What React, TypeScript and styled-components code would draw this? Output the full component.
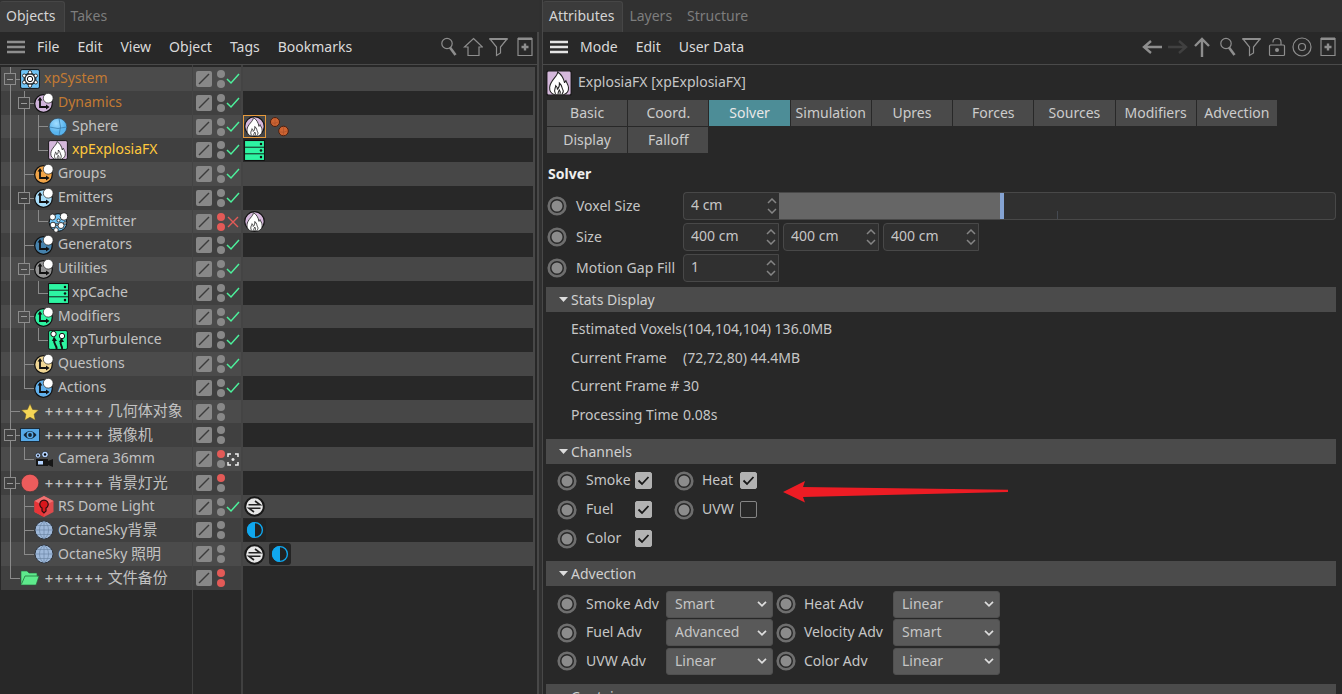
import React from 'react';
import styled, { createGlobalStyle, css } from 'styled-components';

const Global = createGlobalStyle`
  *, *::before, *::after { box-sizing: border-box; }
  body { margin: 0; background: #282828; overflow: hidden; }
  body, button, input, select { font: 14px/20px "Noto Sans", "Noto Sans CJK SC", sans-serif; color: #c6c6c6; }
  button, input, select { border: 0; margin: 0; padding: 0; background: none; }
`;

const Window = styled.main`
  display: grid;
  grid-template-columns: minmax(0, 539fr) minmax(0, 800fr);
  gap: 3px;
  height: 100vh;
  overflow: hidden;
  background: #303030;
`;
const Panel = styled.section<{ $side: 'left' | 'right' }>`
  display: flex;
  flex-direction: column;
  min-width: 0;
  min-height: 0;
  ${p => p.$side === 'right' && css`border-left: 1px solid #484848;`}
`;
const TabBar = styled.nav`
  display: flex;
  height: 32px;
  flex: none;
  background: #313131;
`;
const PanelTab = styled.button<{ $active?: boolean }>`
  margin-top: 1px;
  padding: 0 8px 2px 6px;
  color: ${p => p.$active ? '#d4d4d4' : '#7d7d7d'};
  background: ${p => p.$active ? '#3b3b3b' : 'transparent'};
  border: solid ${p => p.$active ? '#464646' : 'transparent'};
  border-width: 1px 1px 0 0;
  border-radius: 3px 3px 0 0;
`;
const MenuBar = styled.div<{ $side: 'left' | 'right' }>`
  display: flex;
  align-items: center;
  flex: none;
  height: 33px;
  padding: 0 ${p => p.$side === 'left' ? 2 : 4}px 2px 7px;
  background: #282828;
  border-bottom: 1px solid #4a4a4a;
  ${p => p.$side === 'left' && css`border-right: 2px solid #484848;`}
`;
const Menus = styled.div`
  display: flex;
  gap: 18px;
  padding: 0 0 1px 12px;
`;
const Menu = styled.button`
  color: #dadada;
  white-space: nowrap;
`;
const Tools = styled.div`
  display: flex;
  align-items: center;
  gap: 6px;
  margin-left: auto;
`;
const IconButton = styled.button`
  display: flex;
  align-items: center;
  justify-content: center;
`;
const Glyph = styled.svg`
  display: block;
  flex: none;
`;

/* Object tree */
const Tree = styled.ul`
  display: grid;
  grid-auto-rows: 24px 24px 23px 24px;
  align-content: start;
  flex: 1;
  min-height: 0;
  margin: 0;
  padding: 2px 2px 0 1px;
  list-style: none;
  border-right: 2px solid #484848;
  background:
    linear-gradient(#404040, #404040) 192px 0 / 1px 100% no-repeat,
    linear-gradient(#404040, #404040) 241px 0 / 2px 100% no-repeat,
    #282828;
`;
const TreeRow = styled.li`
  display: grid;
  grid-template-columns: 191px 48px minmax(0, 1fr);
  gap: 1px;
  background: #444444;
  border-right: 2px solid #484848;
  --cell: #4b4b4b;
  --tags: #474747;
  &:nth-child(even) { --cell: #404040; --tags: #282828; }
`;
const NameCell = styled.div`
  display: flex;
  align-items: center;
  padding-left: 2px;
  background: var(--cell);
  white-space: nowrap;
`;
type GuideKind = 'line' | 'tee' | 'end' | 'box';
const Guide = styled.span<{ $kind: GuideKind; $wide: boolean }>`
  display: flex;
  align-items: center;
  align-self: stretch;
  flex: none;
  width: ${p => p.$wide ? 17 : 14}px;
  padding-left: 1px;
  background-image: linear-gradient(#8a8a8a, #8a8a8a), linear-gradient(#8a8a8a, #8a8a8a);
  background-repeat: no-repeat;
  background-position: 7px 0, 7px 50%;
  background-size: 1px ${p => p.$kind === 'end' ? '50%' : '100%'}, ${p => p.$kind === 'line' ? 0 : 10}px 1px;
`;
const Expander = styled.button`
  width: 12px;
  height: 12px;
  border: 1px solid #8c8c8c;
  background: linear-gradient(#9a9a9a, #9a9a9a) center / 6px 1px no-repeat, var(--cell);
`;
const NodeIcon = styled.span`
  display: flex;
  width: 20px;
  justify-content: center;
  margin-right: 4px;
`;
const NodeName = styled.span<{ $tone?: string }>`
  padding-bottom: 2px;
  color: ${p => p.$tone ?? '#c2c2c2'};
`;
const Pluses = styled.span`
  font-family: Inter, sans-serif;
  font-size: 15px;
`;
const Cjk = styled.span`
  font-family: "Noto Sans CJK SC", sans-serif;
  font-size: 15px;
`;
const StateCell = styled.div`
  display: flex;
  align-items: center;
  padding-left: 3px;
  background: var(--cell);
`;
const LayerButton = styled.button`
  display: flex;
  width: 16px;
  height: 16px;
  border-radius: 2px;
  background: #888888;
`;
const Dots = styled.span`
  display: grid;
  gap: 2px;
  margin: 0 1px 0 5px;
`;
const Dot = styled.i<{ $off?: boolean }>`
  width: 8px;
  height: 8px;
  border-radius: 50%;
  background: ${p => p.$off ? '#e35a57' : '#888888'};
`;
const TagCell = styled.div`
  display: flex;
  align-items: center;
  gap: 2px;
  margin-left: 1px;
  background: var(--tags);
`;
const Tag = styled.button<{ $selected?: boolean }>`
  display: flex;
  align-items: center;
  justify-content: center;
  width: 23px;
  height: 23px;
  border: 1px solid ${p => p.$selected ? '#e69a3c' : 'transparent'};
`;

/* Attributes */
const Attributes = styled.div`
  flex: 1;
  min-height: 0;
  overflow: hidden;
  padding: 5px 6px 0 3px;
  background: #282828;
`;
const ObjectTitle = styled.h1`
  display: flex;
  align-items: center;
  gap: 6px;
  height: 26px;
  margin: 0 0 4px;
  font-size: 14px;
  font-weight: 400;
`;
const TitleText = styled.span`
  padding-bottom: 2px;
`;
const PageTabs = styled.div`
  display: grid;
  grid-template-columns: repeat(auto-fill, minmax(80px, 1fr));
  grid-auto-rows: 26px;
  gap: 1px;
  max-width: 730px;
  margin-left: 1px;
`;
const PageTab = styled.button<{ $active?: boolean }>`
  white-space: nowrap;
  background: ${p => p.$active ? '#4d8d97' : '#4a4a4a'};
  color: ${p => p.$active ? '#e8e8e8' : '#cccccc'};
`;
const Heading = styled.h2`
  margin: 11px 0 8px 2px;
  font-size: 14px;
  line-height: 20px;
  font-weight: 700;
  color: #eeeeee;
`;
const Fields = styled.div`
  display: grid;
  grid-auto-rows: 28px;
  gap: 3px;
  margin-bottom: 5px;
`;
const Field = styled.div`
  display: grid;
  grid-template-columns: 30px 107px minmax(0, 1fr);
  align-items: center;
  white-space: nowrap;
`;
const Label = styled.label`
  padding-bottom: 1px;
`;
const Inputs = styled.div`
  display: flex;
  gap: 4px;
`;
const NumberBox = styled.span<{ $joined?: boolean }>`
  display: flex;
  align-items: center;
  flex: none;
  width: 96px;
  height: 28px;
  padding: 0 2px 0 7px;
  background: #303030;
  border: 1px solid #484848;
  border-radius: 4px 0 0 4px;
  ${p => p.$joined && css`border-right: 0;`}
  input { flex: 1; min-width: 0; padding-bottom: 2px; outline: 0; }
`;
const SliderBox = styled.div`
  display: flex;
  min-width: 0;
`;
const Track = styled.span`
  display: flex;
  flex: 1;
  min-width: 0;
  height: 28px;
  background: #303030;
  border: 1px solid #484848;
  border-left: 0;
  border-radius: 0 4px 4px 0;
  overflow: hidden;
`;
const Range = styled.input`
  appearance: none;
  width: 100%;
  height: 26px;
  background:
    linear-gradient(#666666, #666666) 0 0 / 40% 100% no-repeat,
    linear-gradient(#454a52, #454a52) 50% 100% / 1px 8px no-repeat;
  &::-webkit-slider-thumb {
    appearance: none;
    width: 4px;
    height: 26px;
    background: #85a3d2;
  }
`;
const Bar = styled.button`
  display: flex;
  align-items: center;
  width: 100%;
  height: 25px;
  padding-left: 13px;
  background: #4b4b4b;
  color: #d0d0d0;
  svg { margin-right: 3px; }
`;
const Stats = styled.dl`
  display: grid;
  grid-template-columns: 112px 1fr;
  grid-template-rows: 29px 29px 28px 29px;
  align-items: center;
  margin: 0;
  padding: 2px 0 10px 25px;
  white-space: nowrap;
  dt, dd { margin: 0; }
`;
const Channels = styled.div`
  display: grid;
  grid-template-columns: 30px 49px 38px 29px 38px 20px;
  grid-auto-rows: 29px;
  align-items: center;
  padding: 2px 0 8px 10px;
  white-space: nowrap;
`;
const Check = styled.input`
  appearance: none;
  width: 17px;
  height: 17px;
  border: 1px solid #858585;
  border-radius: 2px;
  &:checked {
    border-color: #b2b2b2;
    background: #b2b2b2 url("data:image/svg+xml,%3Csvg xmlns='http://www.w3.org/2000/svg' viewBox='0 0 15 15'%3E%3Cpath d='M2.500 7.500l3.500 3.500 6.500-7' fill='none' stroke='%23181818' stroke-width='1.800'/%3E%3C/svg%3E") center / 15px no-repeat;
  }
`;
const Advection = styled.div`
  display: grid;
  grid-template-columns: 30px 80px 109px 29px 89px 107px;
  grid-template-rows: 28px 29px 28px;
  align-items: center;
  padding: 4px 0 9px 10px;
  white-space: nowrap;
`;
const Select = styled.select`
  appearance: none;
  width: 107px;
  height: 27px;
  padding: 0 24px 1px 8px;
  border: 1px solid #505050;
  border-radius: 3px;
  background: #595959 url("data:image/svg+xml,%3Csvg xmlns='http://www.w3.org/2000/svg' viewBox='0 0 10 6'%3E%3Cpath d='M1 .8l4 4 4-4' fill='none' stroke='%23dddddd' stroke-width='1.700'/%3E%3C/svg%3E") right 5px center / 10px 6px no-repeat;
`;
const Keyframe = styled.button`
  display: flex;
  width: 20px;
  margin-left: 1px;
`;
const Annotated = styled.div`
  position: relative;
`;
const Pointer = styled.svg`
  position: absolute;
  left: 237px;
  top: 17px;
`;

const Flame = ({ s = 20, round = false }: { s?: number; round?: boolean }) => (
  <Glyph width={s} height={s} viewBox="0 0 20 20">
    {round ? <circle cx="10" cy="10" r="9.3" fill="#d5b8dc" stroke="#111" strokeWidth="1.2" />
      : <rect x=".6" y=".6" width="18.8" height="18.8" rx="1.5" fill="#d5b8dc" stroke="#181818" strokeWidth="1" />}
    <path d="M9 1.500C9 5 3.200 8 2.800 13.300c-.2 3 1.500 5 3.800 5.700h7c2.500-.8 3.900-3 3.700-5.500-.2-2.500-1.500-3.600-2-5.300-.6.600-.8 1-1 1.700C13.500 6 12 3.500 9 1.500z" fill="#fff" stroke="#222" strokeWidth=".8" />
    <path d="M7.300 18.500c-2-3 .2-4.300.2-6.500 1 .8 1.200 1.500 1.300 2.700 1.200-1 1.700-2.800 1.500-4.700 2.200 2 1.700 3.500 2.600 5 .8 1.200.3 2.500-.6 3.500M9.300 18.500c-.3-1.500.7-2 .9-3.200.9 1 1 2 .5 3.200" fill="none" stroke="#222" strokeWidth=".8" />
  </Glyph>
);
const Axis = ({ c }: { c: string }) => (
  <Glyph width="20" height="20" viewBox="0 0 20 20">
    <circle cx="9.5" cy="10.5" r="8.8" fill={c} stroke="#111" strokeWidth="1.2" />
    <path d="M6 6v8h7" fill="none" stroke="#111" strokeWidth="1.8" />
    <path d="M3.600 7.500L6 4l2.400 3.500zM12 11.600l3.600 2.400-3.600 2.400z" fill="#111" />
    <circle cx="14.200" cy="5.200" r="4.900" fill="#fff" stroke="#222" strokeWidth=".7" />
  </Glyph>
);
const Cache = () => (
  <Glyph width="21" height="21" viewBox="0 0 20 20">
    <rect width="20" height="20" rx="1" fill="#111" />
    {[1, 7.3, 13.6].map(y => <g key={y}><rect x="1" y={y} width="18" height="5.4" fill="#2df5a2" /><circle cx="16.2" cy={y + 2.7} r="1.2" fill="#111" /></g>)}
  </Glyph>
);
const Sky = () => (
  <Glyph width="20" height="20" viewBox="0 0 20 20">
    <circle cx="10" cy="10" r="9" fill="#9fb9da" stroke="#30363f" />
    <path d="M10 1v18M1 10h18M3 5.500h14M3 14.500h14M10 1C4 5 4 15 10 19M10 1c6 4 6 14 0 18" fill="none" stroke="#6f88a6" strokeWidth=".7" />
  </Glyph>
);
const Swap = () => (
  <Glyph width="21" height="21" viewBox="0 0 21 21">
    <circle cx="10.5" cy="10.5" r="9.3" fill="#e6e6e6" stroke="#181818" strokeWidth="2" />
    <path d="M4.500 8.800H16L11 5M16.500 12.200H5l5 3.800" fill="none" stroke="#222" strokeWidth="1.600" />
  </Glyph>
);
const Half = () => (
  <Glyph width="22" height="22" viewBox="0 0 22 22">
    <rect width="22" height="22" rx="3" fill="#242424" />
    <circle cx="11" cy="11" r="7.400" fill="#222" stroke="#10a7ee" strokeWidth="1.400" />
    <path d="M11 3a8 8 0 0 0 0 16z" fill="#10a7ee" />
  </Glyph>
);
const icons: Record<string, React.ReactNode> = {
  system: <Glyph width="20" height="20" viewBox="0 0 20 20"><rect x=".6" y=".6" width="18.8" height="18.8" rx="1.5" fill="#70c4f5" stroke="#111" /><path d="M10 3.300l5.800 3.400v6.600L10 16.700l-5.800-3.400V6.700z" fill="none" stroke="#111" strokeWidth="1" /><circle cx="10" cy="10" r="5" fill="#fff" stroke="#111" /><circle cx="10" cy="10" r="2.700" fill="#fff" stroke="#111" />{[[10, 3.3], [15.8, 6.7], [15.8, 13.3], [10, 16.7], [4.2, 13.3], [4.2, 6.7]].map(([x, y]) => <circle key={`${x}-${y}`} cx={x} cy={y} r="1.7" fill="#fff" stroke="#111" strokeWidth=".8" />)}</Glyph>,
  sphere: <Glyph width="20" height="20" viewBox="0 0 20 20"><defs><radialGradient id="ball" cx=".4" cy=".3"><stop stopColor="#a0dcff" /><stop offset="1" stopColor="#59b4ee" /></radialGradient></defs><circle cx="10" cy="10" r="8.800" fill="url(#ball)" stroke="#34495a" strokeWidth=".7" /><path d="M1.300 10q8.700 3 17.400 0M11 1.300q3 8.500 0 17.400" fill="none" stroke="#3c7fae" strokeWidth=".8" /></Glyph>,
  flame: <Flame />,
  emitter: <Glyph width="20" height="20" viewBox="0 0 20 20"><circle cx="10" cy="10.5" r="8.8" fill="#70c4f5" stroke="#111" />{[[4.5, 5, 3], [16, 4.5, 3.8], [5, 13, 2.8], [13, 13.5, 3], [8, 18, 2.3], [10.5, 8.5, 1.5], [17, 11, 1.3], [9, 12.5, 1]].map(([x, y, r]) => <circle key={`${x}-${y}`} cx={x} cy={y} r={r} fill="#fff" stroke="#111" strokeWidth=".8" />)}</Glyph>,
  cache: <Cache />,
  turbulence: <Glyph width="20" height="20" viewBox="0 0 20 20"><rect x=".6" y=".6" width="18.8" height="18.8" rx="1.5" fill="#2df5a2" stroke="#111" /><path d="M8.500 19c1-4-4-5-2-9M14 19c1-3-3-4-1-8" fill="none" stroke="#111" strokeWidth="2" /><path d="M4 11l2-4.500L9 11zM11 12l2.500-4.500L16 12z" fill="#111" /><circle cx="5.500" cy="4" r="2.700" fill="#fff" stroke="#111" /><circle cx="14" cy="6" r="2.700" fill="#fff" stroke="#111" /></Glyph>,
  star: <Glyph width="20" height="20" viewBox="0 0 20 20"><path d="M10 1.800l2.600 5.600 6 .7-4.500 4.100 1.200 6-5.300-3-5.300 3 1.200-6L1.400 8.100l6-.7z" fill="#f5d555" stroke="#54492a" strokeWidth=".5" /></Glyph>,
  eye: <Glyph width="20" height="20" viewBox="0 0 20 20"><rect x=".5" y="3.500" width="19" height="13" fill="#57aae8" stroke="#1c2c3a" /><path d="M3.500 10Q10 2 16.500 10 10 18 3.500 10z" fill="#142433" /><circle cx="10" cy="10" r="3.400" fill="#57aae8" /><circle cx="10" cy="10" r="1.900" fill="#142433" /></Glyph>,
  camera: <Glyph width="20" height="20" viewBox="0 0 20 20"><path d="M2 10h12v2l5-2v8l-5-2v1H2z" fill="#161616" /><rect x="4" y="12" width="5" height="3.500" fill="#b5d4ff" /><circle cx="4" cy="6.500" r="2.700" fill="#b5d4ff" stroke="#161616" strokeWidth=".7" /><circle cx="11" cy="5.500" r="3.300" fill="#b5d4ff" stroke="#161616" strokeWidth=".7" /><circle cx="4" cy="6.500" r=".9" /><circle cx="11" cy="5.500" r="1.200" /></Glyph>,
  red: <Glyph width="20" height="20" viewBox="0 0 20 20"><circle cx="10" cy="10" r="8.800" fill="#ed5c5c" stroke="#3d3030" strokeWidth=".6" /></Glyph>,
  dome: <Glyph width="20" height="21" viewBox="0 0 20 21"><path d="M10 0l9.500 5v11L10 21 .5 16V5z" fill="#df4a4c" /><path d="M10 0l9.500 5L10 10 .5 5z" fill="#ef7272" /><path d="M.5 5L10 10v11L.5 16z" fill="#e83437" /><path d="M8 15v-3a4.200 4.200 0 1 1 4 0v3l-2 2z" fill="#d8171c" stroke="#2d0e10" strokeWidth="1.200" /></Glyph>,
  sky: <Sky />,
  folder: <Glyph width="20" height="20" viewBox="0 0 20 20"><path d="M1 3h6l2 2h8v3h2l-3 9H1z" fill="#5eea8c" stroke="#285c3a" strokeWidth=".6" /><path d="M1.500 16L5 8h13" fill="none" stroke="#2d8a4c" /></Glyph>,
};
const tags: Record<string, React.ReactNode> = {
  flame: <Flame s={21} round />,
  balls: <Glyph width="21" height="21" viewBox="0 0 21 21"><circle cx="6" cy="6" r="4.500" fill="#cd6432" stroke="#4a1f10" /><circle cx="14.500" cy="15" r="4.800" fill="#cd6432" stroke="#4a1f10" /><path d="M3 7q3 1 6-1M11 16q4 1 7-1M6 2v8M14.500 11v8" fill="none" stroke="#a84e28" strokeWidth=".6" /></Glyph>,
  cache: <Cache />,
  swap: <Swap />,
  half: <Half />,
};

type Row = { name: string; icon: string; guides: GuideKind[]; tone?: string; state?: 'on' | 'off' | 'target'; dots?: [boolean, boolean]; tags?: string[] };
const axisColors: Record<string, string> = { Dynamics: '#d0b3dc', Groups: '#f0a448', Emitters: '#a9dffc', Generators: '#4682ac', Utilities: '#969696', Modifiers: '#2df5a2', Questions: '#f0d694', Actions: '#62b2ee' };
const rows: Row[] = [
  { name: 'xpSystem', icon: 'system', guides: ['box'], tone: '#c27a33', state: 'on' },
  { name: 'Dynamics', icon: 'axis', guides: ['line', 'box'], tone: '#c27a33', state: 'on' },
  { name: 'Sphere', icon: 'sphere', guides: ['line', 'line', 'tee'], state: 'on', tags: ['flame', 'balls'] },
  { name: 'xpExplosiaFX', icon: 'flame', guides: ['line', 'line', 'end'], tone: '#ffc83c', state: 'on', tags: ['cache'] },
  { name: 'Groups', icon: 'axis', guides: ['line', 'tee'], state: 'on' },
  { name: 'Emitters', icon: 'axis', guides: ['line', 'box'], state: 'on' },
  { name: 'xpEmitter', icon: 'emitter', guides: ['line', 'line', 'end'], state: 'off', dots: [true, true], tags: ['flame'] },
  { name: 'Generators', icon: 'axis', guides: ['line', 'tee'], state: 'on' },
  { name: 'Utilities', icon: 'axis', guides: ['line', 'box'], state: 'on' },
  { name: 'xpCache', icon: 'cache', guides: ['line', 'line', 'end'], state: 'on' },
  { name: 'Modifiers', icon: 'axis', guides: ['line', 'box'], state: 'on' },
  { name: 'xpTurbulence', icon: 'turbulence', guides: ['line', 'line', 'end'], state: 'on' },
  { name: 'Questions', icon: 'axis', guides: ['line', 'tee'], state: 'on' },
  { name: 'Actions', icon: 'axis', guides: ['line', 'end'], state: 'on' },
  { name: '++++++ 几何体对象', icon: 'star', guides: ['tee'] },
  { name: '++++++ 摄像机', icon: 'eye', guides: ['box'] },
  { name: 'Camera 36mm', icon: 'camera', guides: ['line', 'end'], state: 'target', dots: [true, false] },
  { name: '++++++ 背景灯光', icon: 'red', guides: ['box'], dots: [true, false] },
  { name: 'RS Dome Light', icon: 'dome', guides: ['line', 'tee'], state: 'on', tags: ['swap'] },
  { name: 'OctaneSky背景', icon: 'sky', guides: ['line', 'tee'], tags: ['half'] },
  { name: 'OctaneSky 照明', icon: 'sky', guides: ['line', 'end'], tags: ['swap', 'half'] },
  { name: '++++++ 文件备份', icon: 'folder', guides: ['end'], dots: [true, true] },
];

const renderName = (name: string) => name.split(/(\++ |[\u4e00-\u9fff]+)/).filter(Boolean).map(part => {
  if (part.startsWith('+')) return <Pluses key={part}>{part}</Pluses>;
  if (/[\u4e00-\u9fff]/.test(part)) return <Cjk key={part}>{part}</Cjk>;
  return part;
});

const StateMark = ({ state }: { state?: Row['state'] }) => {
  if (state === 'on') return <Glyph width="14" height="12" viewBox="0 0 14 12"><path d="M1 6l4 4 8-9" fill="none" stroke="#4df09c" strokeWidth="1.500" /></Glyph>;
  if (state === 'off') return <Glyph width="14" height="12" viewBox="0 0 14 12"><path d="M2 1l10 10M12 1L2 11" stroke="#e35a57" strokeWidth="1.400" /></Glyph>;
  if (state === 'target') return <Glyph width="14" height="13" viewBox="0 0 14 13"><path d="M2 4V1h3M9 1h3v3M12 9v3H9M5 12H2V9M7 5v3M5.500 6.500h3" fill="none" stroke="#eee" strokeWidth="1.500" /></Glyph>;
  return null;
};

const line = { fill: 'none', stroke: '#8e8e8e', strokeWidth: 1.2 };
const Burger = ({ c }: { c: string }) => <Glyph width="18" height="14" viewBox="0 0 18 14"><path d="M0 2h18M0 7h18M0 12h18" stroke={c} strokeWidth="2.400" /></Glyph>;
const Search = () => <Glyph width="20" height="20" viewBox="0 0 20 20"><circle cx="10" cy="6.500" r="5.200" {...line} /><path d="M13 10.500l5.500 7.500" stroke="#8e8e8e" strokeWidth="2.600" /></Glyph>;
const Home = () => <Glyph width="20" height="20" viewBox="0 0 20 20"><path d="M10.500 1.500l9 8.500H16v8.500H5V10H1.500z" {...line} /></Glyph>;
const Funnel = () => <Glyph width="20" height="20" viewBox="0 0 20 20"><path d="M1 2h17l-6.500 8v6l-4 2.500V10z" {...line} /><path d="M.5 2h18" stroke="#8e8e8e" strokeWidth="2" /></Glyph>;
const AddBox = () => <Glyph width="20" height="20" viewBox="0 0 20 20"><path d="M3 1.500h14v17H3z" {...line} /><path d="M3 1.800h14M10 6.500v7M6.500 10h7" stroke="#8e8e8e" strokeWidth="2.400" /></Glyph>;
const Arrow = ({ d, c, w = 20 }: { d: string; c: string; w?: number }) => <Glyph width={w} height="20" viewBox={`0 0 ${w} 20`}><path d={d} fill="none" stroke={c} strokeWidth="2.400" /></Glyph>;
const Lock = () => <Glyph width="18" height="20" viewBox="0 0 18 20"><rect x="1.500" y="8" width="15" height="10.500" rx="1" {...line} /><path d="M5 5.500V5q0-3.500 4-3.500T13 5v3" {...line} /><circle cx="9" cy="13" r="2" fill="#8e8e8e" /></Glyph>;
const Target = () => <Glyph width="20" height="20" viewBox="0 0 20 20"><circle cx="10" cy="10" r="9" {...line} /><circle cx="10" cy="10" r="3.500" {...line} /></Glyph>;
const KeyDot = ({ label }: { label: string }) => (
  <Keyframe aria-label={`Keyframe ${label}`}>
    <Glyph width="20" height="20" viewBox="0 0 20 20"><circle cx="10" cy="10" r="8.300" fill="none" stroke="#6e6e6e" strokeWidth="2.600" /><circle cx="10" cy="10" r="5.500" fill="#8c8c8c" /></Glyph>
  </Keyframe>
);
const Num = ({ label, value, joined }: { label: string; value: string; joined?: boolean }) => (
  <NumberBox $joined={joined}>
    <input id={label} aria-label={label} defaultValue={value} />
    <Glyph width="10" height="16" viewBox="0 0 10 16"><path d="M1 5l4-4 4 4M1 11l4 4 4-4" fill="none" stroke="#858585" strokeWidth="1.500" /></Glyph>
  </NumberBox>
);
const Section = ({ title }: { title: string }) => (
  <Bar><Glyph width="9" height="5" viewBox="0 0 9 5"><path d="M0 0h9L4.500 5z" fill="#ddd" /></Glyph>{title}</Bar>
);
const Channel = ({ name, on }: { name: string; on: boolean }) => (
  <><KeyDot label={name} /><Label htmlFor={name}>{name}</Label><Check type="checkbox" id={name} defaultChecked={on} /></>
);
const Adv = ({ name, value }: { name: string; value: string }) => (
  <><KeyDot label={name} /><Label htmlFor={name}>{name}</Label><Select id={name} defaultValue={value}>{['Smart', 'Advanced', 'Linear'].map(o => <option key={o}>{o}</option>)}</Select></>
);

export default function App() {
  return (
    <Window>
      <Global />
      <Panel $side="left">
        <TabBar><PanelTab $active>Objects</PanelTab><PanelTab>Takes</PanelTab></TabBar>
        <MenuBar $side="left">
          <IconButton aria-label="Panel menu"><Burger c="#8e8e8e" /></IconButton>
          <Menus>{['File', 'Edit', 'View', 'Object', 'Tags', 'Bookmarks'].map(m => <Menu key={m}>{m}</Menu>)}</Menus>
          <Tools>
            <IconButton aria-label="Search"><Search /></IconButton>
            <IconButton aria-label="Home"><Home /></IconButton>
            <IconButton aria-label="Filter"><Funnel /></IconButton>
            <IconButton aria-label="New panel"><AddBox /></IconButton>
          </Tools>
        </MenuBar>
        <Tree>
          {rows.map(r => (
            <TreeRow key={r.name}>
              <NameCell>
                {r.guides.map((g, i) => (
                  <Guide key={i} $kind={g} $wide={i === r.guides.length - 1}>
                    {g === 'box' && <Expander aria-label={`Collapse ${r.name}`} />}
                  </Guide>
                ))}
                <NodeIcon>{r.icon === 'axis' ? <Axis c={axisColors[r.name]} /> : icons[r.icon]}</NodeIcon>
                <NodeName $tone={r.tone}>{renderName(r.name)}</NodeName>
              </NameCell>
              <StateCell>
                <LayerButton aria-label={`Layer of ${r.name}`}><Glyph width="16" height="16" viewBox="0 0 16 16"><path d="M3 13L13 3" stroke="#3c3c3c" strokeWidth="1.500" /></Glyph></LayerButton>
                <Dots><Dot $off={r.dots?.[0]} /><Dot $off={r.dots?.[1]} /></Dots>
                <StateMark state={r.state} />
              </StateCell>
              <TagCell>
                {r.tags?.map(t => <Tag key={t} aria-label={`${t} tag`} $selected={r.name === 'Sphere' && t === 'flame'}>{tags[t]}</Tag>)}
              </TagCell>
            </TreeRow>
          ))}
        </Tree>
      </Panel>
      <Panel $side="right">
        <TabBar><PanelTab $active>Attributes</PanelTab><PanelTab>Layers</PanelTab><PanelTab>Structure</PanelTab></TabBar>
        <MenuBar $side="right">
          <IconButton aria-label="Panel menu"><Burger c="#e4e4e4" /></IconButton>
          <Menus>{['Mode', 'Edit', 'User Data'].map(m => <Menu key={m}>{m}</Menu>)}</Menus>
          <Tools>
            <IconButton aria-label="Back"><Arrow c="#8e8e8e" d="M20 10H2M9 4l-7 6 7 6" /></IconButton>
            <IconButton aria-label="Forward"><Arrow c="#404040" d="M0 10h18M11 4l7 6-7 6" /></IconButton>
            <IconButton aria-label="Up"><Arrow c="#8e8e8e" w={16} d="M8 20V2M1 9l7-7 7 7" /></IconButton>
            <IconButton aria-label="Search"><Search /></IconButton>
            <IconButton aria-label="Filter"><Funnel /></IconButton>
            <IconButton aria-label="Lock"><Lock /></IconButton>
            <IconButton aria-label="Target"><Target /></IconButton>
            <IconButton aria-label="New panel"><AddBox /></IconButton>
          </Tools>
        </MenuBar>
        <Attributes>
          <ObjectTitle><Flame s={26} /><TitleText>ExplosiaFX [xpExplosiaFX]</TitleText></ObjectTitle>
          <PageTabs>
            {['Basic', 'Coord.', 'Solver', 'Simulation', 'Upres', 'Forces', 'Sources', 'Modifiers', 'Advection', 'Display', 'Falloff'].map(t => <PageTab key={t} $active={t === 'Solver'}>{t}</PageTab>)}
          </PageTabs>
          <Heading>Solver</Heading>
          <Fields>
            <Field><KeyDot label="Voxel Size" /><Label htmlFor="Voxel Size">Voxel Size</Label>
              <SliderBox><Num label="Voxel Size" value="4 cm" joined /><Track><Range type="range" aria-label="Voxel Size slider" defaultValue={40} /></Track></SliderBox>
            </Field>
            <Field><KeyDot label="Size" /><Label htmlFor="Size X">Size</Label>
              <Inputs><Num label="Size X" value="400 cm" /><Num label="Size Y" value="400 cm" /><Num label="Size Z" value="400 cm" /></Inputs>
            </Field>
            <Field><KeyDot label="Motion Gap Fill" /><Label htmlFor="Motion Gap Fill">Motion Gap Fill</Label>
              <Inputs><Num label="Motion Gap Fill" value="1" /></Inputs>
            </Field>
          </Fields>
          <Section title="Stats Display" />
          <Stats>
            <dt>Estimated Voxels</dt><dd>(104,104,104) 136.0MB</dd>
            <dt>Current Frame</dt><dd>(72,72,80) 44.4MB</dd>
            <dt>Current Frame #</dt><dd>30</dd>
            <dt>Processing Time</dt><dd>0.08s</dd>
          </Stats>
          <Section title="Channels" />
          <Annotated>
            <Channels>
              <Channel name="Smoke" on /><Channel name="Heat" on />
              <Channel name="Fuel" on /><Channel name="UVW" on={false} />
              <Channel name="Color" on />
            </Channels>
            <Pointer width="226" height="22" viewBox="0 0 226 22"><path d="M0 11L22 0l-2 6 205 2.800V11L20 16l2 5.500z" fill="#ed1c24" /></Pointer>
          </Annotated>
          <Section title="Advection" />
          <Advection>
            <Adv name="Smoke Adv" value="Smart" /><Adv name="Heat Adv" value="Linear" />
            <Adv name="Fuel Adv" value="Advanced" /><Adv name="Velocity Adv" value="Smart" />
            <Adv name="UVW Adv" value="Linear" /><Adv name="Color Adv" value="Linear" />
          </Advection>
          <Section title="Container" />
        </Attributes>
      </Panel>
    </Window>
  );
}
